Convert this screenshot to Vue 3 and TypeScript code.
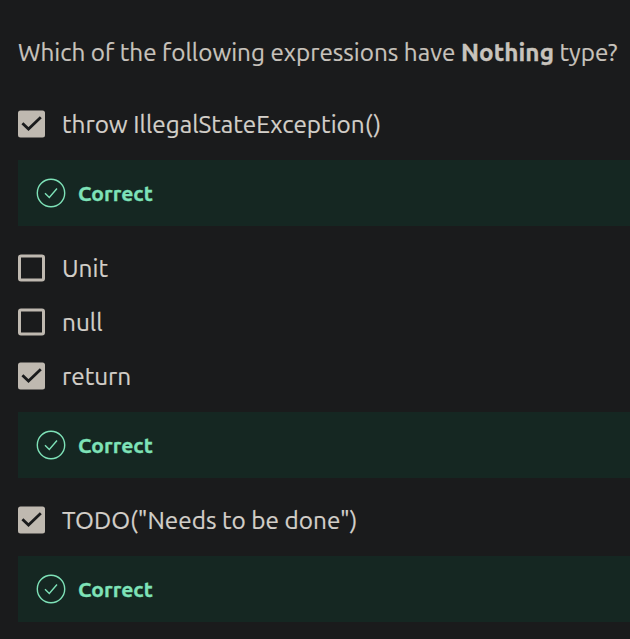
<script setup lang="ts">
interface Option {
  id: string
  label: string
  checked: boolean
}

const options: Option[] = [
  { id: 'throw', label: 'throw IllegalStateException()', checked: true },
  { id: 'unit', label: 'Unit', checked: false },
  { id: 'null', label: 'null', checked: false },
  { id: 'return', label: 'return', checked: true },
  { id: 'todo', label: 'TODO("Needs to be done")', checked: true },
]
</script>

<template>
  <main class="quiz">
    <p class="question">Which of the following expressions have <strong>Nothing</strong> type?</p>
    <template v-for="option in options" :key="option.id">
      <div class="option" role="checkbox" :aria-checked="option.checked">
        <svg class="box" viewBox="0 0 27 28">
          <template v-if="option.checked">
            <rect class="fill" x="0" y="0.4" width="27" height="27.2" rx="2.5" />
            <path class="tick" d="M4.4 13.2 10.5 19 22.8 7.3" />
          </template>
          <rect v-else class="outline" x="1.5" y="1.9" width="24" height="24.2" rx="1.5" />
        </svg>
        <span class="label">{{ option.label }}</span>
      </div>
      <div v-if="option.checked" class="feedback">
        <svg class="badge" viewBox="0 0 30 30">
          <circle cx="15" cy="15" r="13.7" />
          <path d="M9 15.2 13.3 19.4 21 10.5" />
        </svg>
        <span class="verdict">Correct</span>
      </div>
    </template>
  </main>
</template>

<style>
body {
  background: #1a1b1c;
  overflow: hidden;
}
</style>

<style scoped>
.quiz {
  box-sizing: border-box;
  height: 639px;
  padding: 35px 0 0 18px;
  background: #1a1b1c;
  color: #d3cfc9;
  font-family: Ubuntu, 'Noto Sans', sans-serif;
  font-size: 24.33px;
  -webkit-text-stroke: 0.2px currentColor;
  overflow: hidden;
}
.question {
  height: 62px;
  margin: 0;
  font-size: 24.26px;
  line-height: 35px;
  white-space: nowrap;
  color: #c8c3bc;
}
.question strong {
  letter-spacing: 0.08px;
  -webkit-text-stroke-width: 0.35px;
}
.option {
  display: flex;
  align-items: center;
  gap: 17px;
  height: 54px;
  white-space: nowrap;
}
.box {
  flex: none;
  width: 27px;
  height: 28px;
}
.fill {
  fill: #bfb9b0;
}
.tick {
  fill: none;
  stroke: #1a1b1c;
  stroke-width: 2.8;
}
.outline {
  fill: none;
  stroke: #bfb9b0;
  stroke-width: 3;
}
.label {
  line-height: 36px;
}
.feedback {
  display: flex;
  align-items: center;
  gap: 12px;
  box-sizing: border-box;
  height: 66px;
  margin: 9px 0 15px;
  padding-left: 18px;
  background: #152722;
}
.badge {
  flex: none;
  width: 30px;
  height: 30px;
  fill: none;
  stroke: #7ee2b8;
  stroke-width: 1.4;
}
.verdict {
  color: #7ee2b8;
  font-size: 21.1px;
  font-weight: 700;
  line-height: 30px;
  -webkit-text-stroke-width: 0.3px;
}
</style>
